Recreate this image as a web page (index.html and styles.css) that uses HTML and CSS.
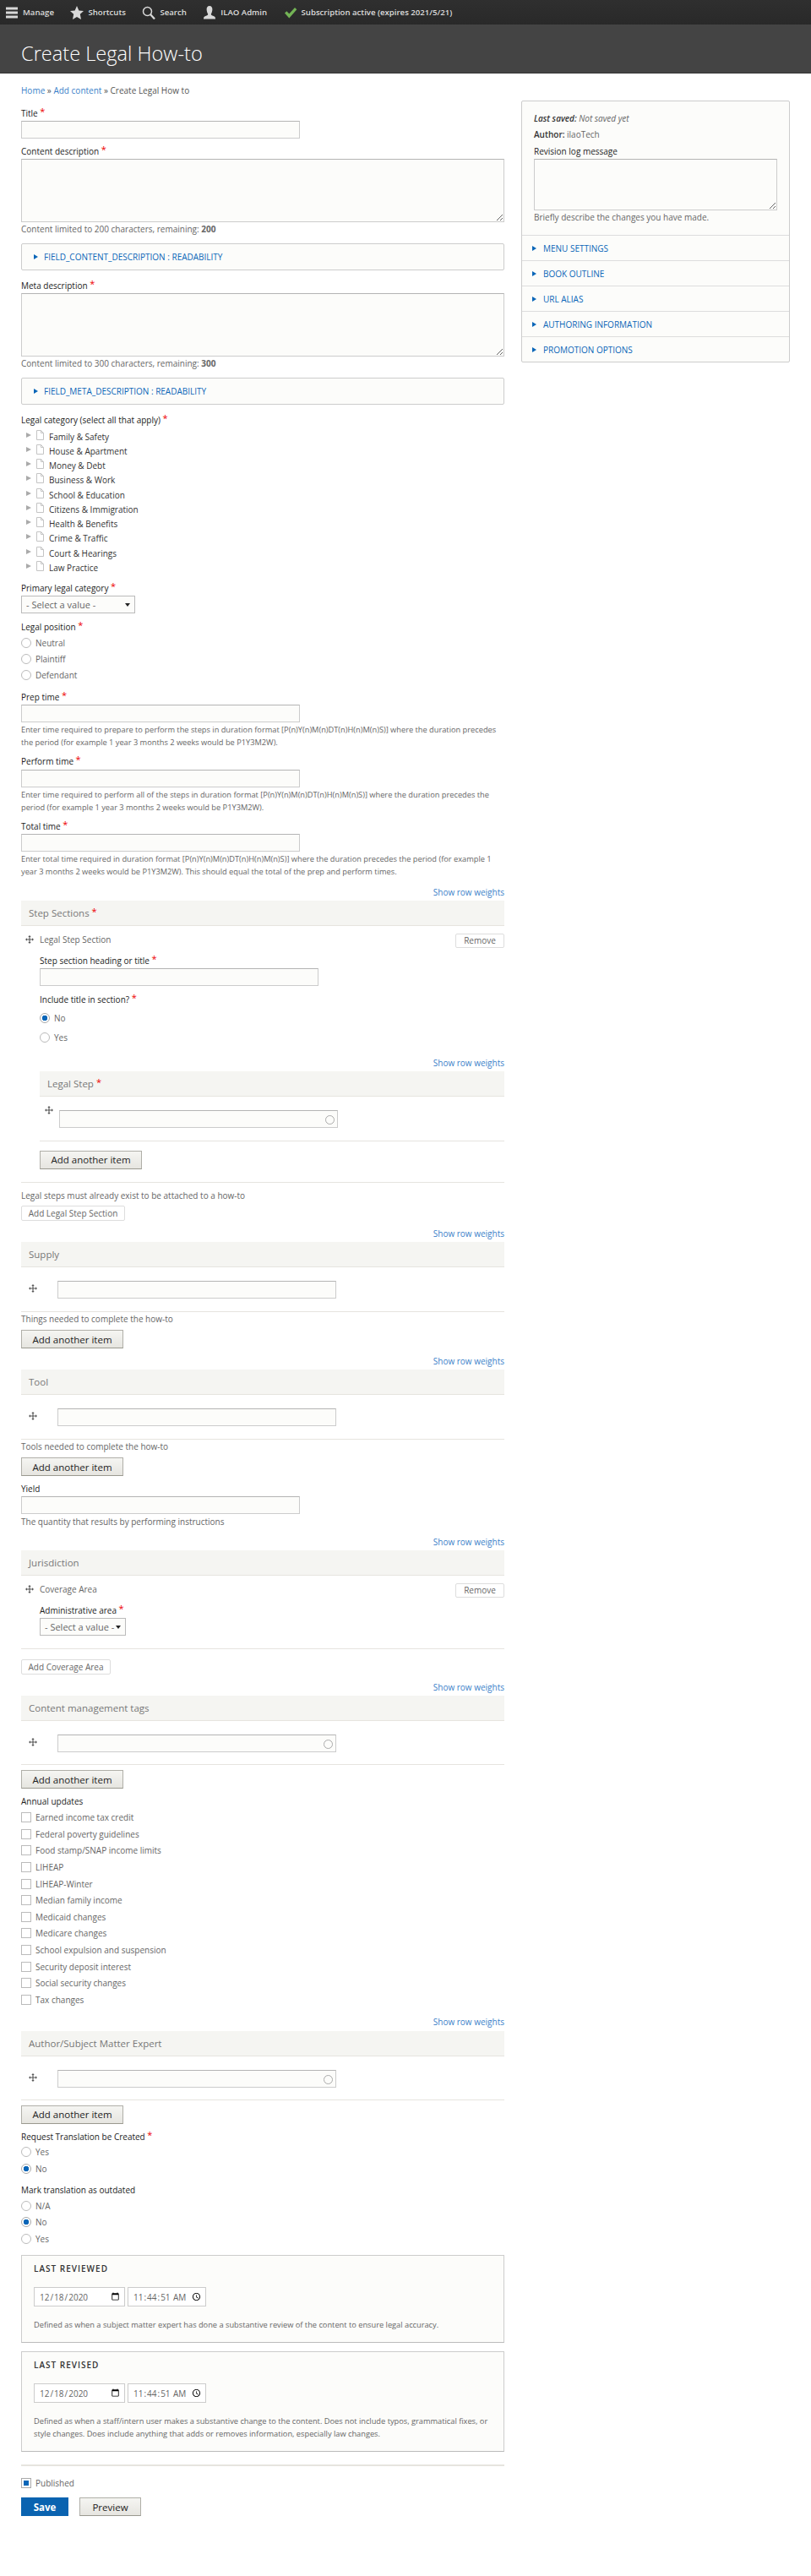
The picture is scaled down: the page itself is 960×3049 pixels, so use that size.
FILE: index.html
```html
<!doctype html>
<html>
<head>
  <title>Create Legal How-to</title>
  <link rel="stylesheet" href="styles.css">
</head>
<body>
  <svg class="defs" width="0" height="0">
    <symbol id="handle" viewBox="0 0 20 20"><path d="M10 0l3.400 4h-2.300v5h5v-2.300L20 10l-3.900 3.400v-2.300h-5v5h2.300L10 20l-3.400-3.900h2.300v-5h-5v2.300L0 10l3.900-3.300V9h5V4H6.600z"/></symbol>
    <symbol id="doc" viewBox="0 0 9 12"><path d="M.5.500h5l3 3v8h-8z" fill="#fff" stroke="#c4c4c4"/><path d="M5.500.500v3h3" fill="none" stroke="#c4c4c4"/></symbol>
  </svg>

  <nav class="toolbar">
    <a class="tool">
      <svg class="tool-icon" viewBox="0 0 16 16"><path d="M1 1.500h14v3H1zM1 6.500h14v3H1zM1 11.500h14v3H1z" fill="#d8d8d8"/></svg>Manage
    </a>
    <a class="tool">
      <svg class="tool-icon" viewBox="0 0 16 16"><path d="M8 0l2.400 5.400 5.600.6-4.200 3.800L13 16 8 12.900 3 16l1.200-6.200L0 6l5.600-.6z" fill="#d8d8d8"/></svg>Shortcuts
    </a>
    <a class="tool">
      <svg class="tool-icon" viewBox="0 0 16 16"><circle cx="6.500" cy="6.500" r="5" fill="none" stroke="#d8d8d8" stroke-width="1.500"/><path d="M10 10l5 5.500" stroke="#d8d8d8" stroke-width="2.200"/></svg>Search
    </a>
    <a class="tool">
      <svg class="tool-icon" viewBox="0 0 16 16"><path d="M8 0c2.300 0 3.400 1.800 3.400 4S10.300 9 9.800 9.800c0 1.200 1 1.500 3 2.200 1.400.5 2.200 1.200 2.200 3.500H1c0-2.300.8-3 2.200-3.500 2-.7 3-1 3-2.200C5.700 9 4.600 6.200 4.600 4S5.700 0 8 0z" fill="#d8d8d8"/></svg>ILAO Admin
    </a>
    <a class="tool">
      <svg class="tool-icon" viewBox="0 0 16 16"><path d="M1 8.500l2.300-2.300 3 3L13 2l2.300 2.300L6.300 14.500z" fill="#73b355"/></svg>Subscription active (expires 2021/5/21)
    </a>
  </nav>

  <header class="page-head">
    <h1>Create Legal How-to</h1>
  </header>

  <div class="layout">
    <form class="main">
      <div class="crumbs"><a>Home</a> » <a>Add content</a> » Create Legal How to</div>

      <div class="field first">
        <label>Title <i>*</i></label>
        <input class="text" type="text">
      </div>
      <div class="field">
        <label>Content description <i>*</i></label>
        <textarea class="area"></textarea>
        <div class="count">Content limited to 200 characters, remaining: <b>200</b></div>
      </div>
      <details class="box"><summary>FIELD_CONTENT_DESCRIPTION : READABILITY</summary></details>
      <div class="field after-box">
        <label>Meta description <i>*</i></label>
        <textarea class="area"></textarea>
        <div class="count">Content limited to 300 characters, remaining: <b>300</b></div>
      </div>
      <details class="box"><summary>FIELD_META_DESCRIPTION : READABILITY</summary></details>

      <div class="field after-box">
        <label>Legal category (select all that apply) <i>*</i></label>
        <ul class="tree">
          <li><svg class="doc"><use href="#doc"/></svg>Family &amp; Safety</li>
          <li><svg class="doc"><use href="#doc"/></svg>House &amp; Apartment</li>
          <li><svg class="doc"><use href="#doc"/></svg>Money &amp; Debt</li>
          <li><svg class="doc"><use href="#doc"/></svg>Business &amp; Work</li>
          <li><svg class="doc"><use href="#doc"/></svg>School &amp; Education</li>
          <li><svg class="doc"><use href="#doc"/></svg>Citizens &amp; Immigration</li>
          <li><svg class="doc"><use href="#doc"/></svg>Health &amp; Benefits</li>
          <li><svg class="doc"><use href="#doc"/></svg>Crime &amp; Traffic</li>
          <li><svg class="doc"><use href="#doc"/></svg>Court &amp; Hearings</li>
          <li><svg class="doc"><use href="#doc"/></svg>Law Practice</li>
        </ul>
      </div>

      <div class="field">
        <label>Primary legal category <i>*</i></label>
        <span class="select-wrap wide"><select><option>- Select a value -</option></select></span>
      </div>
      <div class="field position">
        <label>Legal position <i>*</i></label>
        <div class="options">
          <div class="option"><input type="radio" name="position"><span>Neutral</span></div>
          <div class="option"><input type="radio" name="position"><span>Plaintiff</span></div>
          <div class="option"><input type="radio" name="position"><span>Defendant</span></div>
        </div>
      </div>

      <div class="field time-field prep">
        <label>Prep time <i>*</i></label>
        <input class="text" type="text">
        <p class="help">Enter time required to prepare to perform the steps in duration format [P(n)Y(n)M(n)DT(n)H(n)M(n)S)] where the duration precedes the period (for example 1 year 3 months 2 weeks would be P1Y3M2W).</p>
      </div>
      <div class="field time-field">
        <label>Perform time <i>*</i></label>
        <input class="text" type="text">
        <p class="help">Enter time required to perform all of the steps in duration format [P(n)Y(n)M(n)DT(n)H(n)M(n)S)] where the duration precedes the period (for example 1 year 3 months 2 weeks would be P1Y3M2W).</p>
      </div>
      <div class="field time-field">
        <label>Total time <i>*</i></label>
        <input class="text" type="text">
        <p class="help">Enter total time required in duration format [P(n)Y(n)M(n)DT(n)H(n)M(n)S)] where the duration precedes the period (for example 1 year 3 months 2 weeks would be P1Y3M2W). This should equal the total of the prep and perform times.</p>
      </div>

      <section class="multi">
        <a class="weights">Show row weights</a>
        <div class="multi-head">Step Sections <i>*</i></div>
        <div class="para">
          <div class="para-top">
            <svg class="handle"><use href="#handle"/></svg>
            <span class="para-name">Legal Step Section</span>
            <button type="button" class="btn-light remove">Remove</button>
          </div>
          <div class="para-body">
            <div class="field">
              <label>Step section heading or title <i>*</i></label>
              <input class="text" type="text">
            </div>
            <div class="field include">
              <label>Include title in section? <i>*</i></label>
              <div class="options loose">
                <div class="option"><input type="radio" name="inc" checked><span>No</span></div>
                <div class="option"><input type="radio" name="inc"><span>Yes</span></div>
              </div>
            </div>
            <section class="multi nested">
              <a class="weights">Show row weights</a>
              <div class="multi-head">Legal Step <i>*</i></div>
              <div class="row tight">
                <svg class="handle"><use href="#handle"/></svg>
                <span class="auto"><input class="text" type="text"></span>
              </div>
              <button type="button" class="btn">Add another item</button>
            </section>
          </div>
        </div>
        <div class="rule-note">Legal steps must already exist to be attached to a how-to</div>
        <button type="button" class="btn-light add">Add Legal Step Section</button>
      </section>

      <section class="multi">
        <a class="weights">Show row weights</a>
        <div class="multi-head">Supply</div>
        <div class="row">
          <svg class="handle"><use href="#handle"/></svg>
          <input class="text" type="text">
        </div>
        <div class="note">Things needed to complete the how-to</div>
        <button type="button" class="btn">Add another item</button>
      </section>

      <section class="multi">
        <a class="weights">Show row weights</a>
        <div class="multi-head">Tool</div>
        <div class="row">
          <svg class="handle"><use href="#handle"/></svg>
          <input class="text" type="text">
        </div>
        <div class="note">Tools needed to complete the how-to</div>
        <button type="button" class="btn">Add another item</button>
      </section>

      <div class="field yield">
        <label>Yield</label>
        <input class="text" type="text">
        <div class="count">The quantity that results by performing instructions</div>
      </div>

      <section class="multi">
        <a class="weights">Show row weights</a>
        <div class="multi-head">Jurisdiction</div>
        <div class="para">
          <div class="para-top">
            <svg class="handle"><use href="#handle"/></svg>
            <span class="para-name">Coverage Area</span>
            <button type="button" class="btn-light remove">Remove</button>
          </div>
          <div class="para-body">
            <div class="field">
              <label>Administrative area <i>*</i></label>
              <span class="select-wrap"><select><option>- Select a value -</option></select></span>
            </div>
          </div>
        </div>
        <button type="button" class="btn-light add cover">Add Coverage Area</button>
      </section>

      <section class="multi">
        <a class="weights">Show row weights</a>
        <div class="multi-head">Content management tags</div>
        <div class="row">
          <svg class="handle"><use href="#handle"/></svg>
          <span class="auto"><input class="text" type="text"></span>
        </div>
        <button type="button" class="btn">Add another item</button>
      </section>

      <div class="field">
        <label>Annual updates</label>
        <div class="checks">
          <div class="option"><input type="checkbox"><span>Earned income tax credit</span></div>
          <div class="option"><input type="checkbox"><span>Federal poverty guidelines</span></div>
          <div class="option"><input type="checkbox"><span>Food stamp/SNAP income limits</span></div>
          <div class="option"><input type="checkbox"><span>LIHEAP</span></div>
          <div class="option"><input type="checkbox"><span>LIHEAP-Winter</span></div>
          <div class="option"><input type="checkbox"><span>Median family income</span></div>
          <div class="option"><input type="checkbox"><span>Medicaid changes</span></div>
          <div class="option"><input type="checkbox"><span>Medicare changes</span></div>
          <div class="option"><input type="checkbox"><span>School expulsion and suspension</span></div>
          <div class="option"><input type="checkbox"><span>Security deposit interest</span></div>
          <div class="option"><input type="checkbox"><span>Social security changes</span></div>
          <div class="option"><input type="checkbox"><span>Tax changes</span></div>
        </div>
      </div>

      <section class="multi expert">
        <a class="weights">Show row weights</a>
        <div class="multi-head">Author/Subject Matter Expert</div>
        <div class="row">
          <svg class="handle"><use href="#handle"/></svg>
          <span class="auto"><input class="text" type="text"></span>
        </div>
        <button type="button" class="btn">Add another item</button>
      </section>

      <div class="field">
        <label>Request Translation be Created <i>*</i></label>
        <div class="checks">
          <div class="option"><input type="radio" name="req"><span>Yes</span></div>
          <div class="option"><input type="radio" name="req" checked><span>No</span></div>
        </div>
      </div>
      <div class="field">
        <label>Mark translation as outdated</label>
        <div class="checks">
          <div class="option"><input type="radio" name="mark"><span>N/A</span></div>
          <div class="option"><input type="radio" name="mark" checked><span>No</span></div>
          <div class="option"><input type="radio" name="mark"><span>Yes</span></div>
        </div>
      </div>

      <div class="dates">
        <h2>Last reviewed</h2>
        <div class="date-row">
          <input class="date" type="date" value="2020-12-18">
          <input class="clock" type="time" step="1" value="11:44:51">
        </div>
        <p class="help">Defined as when a subject matter expert has done a substantive review of the content to ensure legal accuracy.</p>
      </div>
      <div class="dates">
        <h2>Last revised</h2>
        <div class="date-row">
          <input class="date" type="date" value="2020-12-18">
          <input class="clock" type="time" step="1" value="11:44:51">
        </div>
        <p class="help">Defined as when a staff/intern user makes a substantive change to the content. Does not include typos, grammatical fixes, or style changes. Does include anything that adds or removes information, especially law changes.</p>
      </div>

      <div class="publish">
        <div class="option"><input type="checkbox" checked><span>Published</span></div>
      </div>
      <div class="actions">
        <button type="button" class="btn save">Save</button>
        <button type="button" class="btn">Preview</button>
      </div>
    </form>

    <aside class="side">
      <div class="side-meta">
        <div class="saved"><b>Last saved:</b> Not saved yet</div>
        <div class="author"><b>Author:</b> ilaoTech</div>
        <label>Revision log message</label>
        <textarea class="area log"></textarea>
        <div class="count">Briefly describe the changes you have made.</div>
      </div>
      <details class="side-item"><summary>MENU SETTINGS</summary></details>
      <details class="side-item"><summary>BOOK OUTLINE</summary></details>
      <details class="side-item"><summary>URL ALIAS</summary></details>
      <details class="side-item"><summary>AUTHORING INFORMATION</summary></details>
      <details class="side-item"><summary>PROMOTION OPTIONS</summary></details>
    </aside>
  </div>
</body>
</html>
```
FILE: styles.css
```css
* { box-sizing: border-box; }
body { margin: 0; background: #fff; color: #333; font: 10px/14px "Open Sans", sans-serif; }
a { color: #3b7fc9; }
p { margin: 0; }
ul { list-style: none; margin: 0; padding: 0; }
.defs { position: absolute; }

/* top bars */
.toolbar { display: flex; height: 29px; padding-left: 6px; background: linear-gradient(#2f2f2f, #292929); }
.tool { display: flex; align-items: center; margin-right: 19.5px; color: #ddd; font-size: 9.6px; font-weight: 600; }
.tool-icon { width: 16px; height: 16px; margin-right: 5px; }
.page-head { height: 58px; padding: 0 25px; background: #444; border-bottom: 1px solid #333; }
h1 { margin: 0; color: #fff; font-size: 23.6px; font-weight: 300; line-height: 68px; }

/* page columns */
.layout { display: flex; padding-left: 25px; }
.main { width: 572px; padding-top: 13px; }
.side { width: 318px; height: 310px; margin: 32px 0 0 20px; background: #fcfcfa; border: 1px solid #ccc; border-radius: 2px; color: #666; }
.crumbs { color: #555; }

/* fields */
.field { margin-top: 8px; }
.field.first { margin-top: 13px; }
.field.after-box { margin-top: 11px; }
.field.position { margin-top: 9.5px; }
.field.prep { margin-top: 9px; }
.field.include { margin-top: 9px; }
label { display: block; margin-bottom: 2px; color: #222; }
.time-field label { margin-bottom: 2.5px; }
i { color: #e00; font-style: normal; font-size: 11px; line-height: 10px; vertical-align: 2px; }
.text { display: block; width: 330px; height: 21px; background: #fcfcfa; border: 1px solid #ccc; border-top-color: #b4b4b4; }
.area { display: block; width: 100%; height: 75px; background: #fcfcfa; border: 1px solid #ccc; border-top-color: #b4b4b4; }
.count { margin-top: 1px; color: #666; }
.help { margin-top: 1px; color: #666; font-size: 9.25px; line-height: 15px; }

.box { height: 32px; margin-top: 10px; background: #fcfcfa; border: 1px solid #ccc; border-radius: 2px; }
.box summary, .side-item summary { display: flex; align-items: center; height: 100%; color: #0a66b8; list-style: none; }
.box summary { padding-left: 14px; }
.box summary::before, .side-item summary::before { content: ""; margin-right: 7px; border-left: 5px solid #0a66b8; border-top: 3px solid transparent; border-bottom: 3px solid transparent; }

/* category tree */
.tree { margin-top: 4px; padding-left: 6px; }
.tree li { display: flex; align-items: center; height: 17.25px; color: #333; }
.tree li::before { content: ""; margin: -4px 6px 0 0; border-left: 6px solid #aaa; border-top: 3px solid transparent; border-bottom: 3px solid transparent; }
.doc { width: 9px; height: 12px; margin: -4px 6px 0 0; }

.select-wrap { position: relative; display: inline-block; width: 102px; vertical-align: top; }
.select-wrap.wide { width: 135px; }
.select-wrap::after { content: ""; position: absolute; right: 6px; top: 9px; border-top: 4px solid #222; border-left: 3px solid transparent; border-right: 3px solid transparent; }
select { display: block; width: 100%; height: 21px; padding-left: 5px; appearance: none; background: #fcfcfa; border: 1px solid #bbb; color: #666; font: 11px "Open Sans", sans-serif; }

/* radios and checkboxes */
.option { display: flex; align-items: center; height: 19.6px; color: #666; }
.options .option { height: 19.3px; }
.option input { flex: none; width: 12px; height: 12px; margin: 0 5px 0 0; appearance: none; background: #fff; border: 1px solid #bbb; }
input[type=radio] { border-radius: 50%; }
input[type=radio]:checked { border-color: #aaa; background: radial-gradient(circle, #0a66b8 0 3px, #fff 3.5px); }
input[type=checkbox]:checked { border-color: #aaa; background: #fff; box-shadow: inset 0 0 0 2px #fff, inset 0 0 0 6px #0a66b8; }
.options.loose { padding-top: 1.5px; }
.options.loose .option { height: 23px; }

/* multi value tables */
.multi { margin-top: 8px; }
.time-field + .multi, .yield + .multi { margin-top: 9.5px; }
.field + .multi.expert { margin-top: 9.5px; }
.multi.nested { margin-top: 12px; }
.weights { display: block; text-align: right; }
.multi-head { height: 30px; margin-top: 3px; padding-left: 9px; background: #f5f5f2; border-bottom: 1px solid #e6e4df; color: #777; font-size: 11.5px; line-height: 29px; }
.expert .multi-head { margin-top: 3.5px; }
.para { padding-bottom: 15px; border-bottom: 1px solid #e6e4df; }
.para-top { display: flex; align-items: flex-start; padding: 9px 0 0 5px; }
.handle { flex: none; width: 10px; height: 10px; margin-top: 4px; fill: #555; }
.para-top .handle { margin-top: 2px; }
.para-name { flex: 1; margin-left: 7px; color: #666; }
.para-body { padding-left: 22px; }
.row { display: flex; align-items: flex-start; gap: 24px; padding: 16px 0 14.5px 9px; border-bottom: 1px solid #e6e4df; }
.row.tight { gap: 7px; padding-left: 5.5px; }
.row.tight .handle { margin-top: -5px; }
.auto { position: relative; display: block; }
.auto::after { content: ""; position: absolute; right: 4px; top: 6px; width: 9px; height: 9px; border: 1px solid #aaa; border-radius: 50%; }
.note { margin-top: 1.5px; color: #666; }
.rule-note { margin-top: 8.5px; color: #666; }

.btn { display: block; width: 121px; height: 22px; margin-top: 6px; padding: 0; background: linear-gradient(#f5f5f2, #e6e5e0); border: 1px solid #b0afa8; border-bottom-color: #9a998f; color: #222; font: 11.5px "Open Sans", sans-serif; }
.nested .btn { margin-top: 11px; }
.expert .btn { margin-top: 5.5px; }
.btn-light { height: 18px; padding: 0; background: #fff; border: 1px solid #ddd; border-radius: 2px; color: #666; font: 10px "Open Sans", sans-serif; }
.remove { width: 58px; height: 17px; }
.add { display: block; width: 123px; margin-top: 5px; }
.add.cover { width: 106px; margin-top: 12px; }
.yield .count { margin-top: 2px; }

/* date boxes */
.dates { margin-top: 10px; padding: 8px 14px 13.5px; background: #fcfcfa; border: 1px solid #ccc; border-bottom-color: #bbb; }
h2 { margin: 0; color: #333; font-size: 10px; font-weight: 600; letter-spacing: 1px; text-transform: uppercase; }
.date-row { display: flex; gap: 3px; margin-top: 15px; }
.date, .clock { height: 23px; padding: 0 5px; background: #fff; border: 1px solid #ccc; color: #666; font: 10px "Open Sans", sans-serif; }
.date { width: 108px; }
.clock { width: 93px; }
.date::-webkit-calendar-picker-indicator, .clock::-webkit-calendar-picker-indicator { width: 11px; height: 11px; margin: 0; padding: 0; }
.dates .help { margin-top: 13.5px; }

.publish { margin-top: 15px; padding-top: 10px; border-top: 2px solid #e6e4df; }
.actions { display: flex; gap: 13px; margin-top: 7px; }
.actions .btn { width: 73px; margin-top: 0; }
.actions .save { width: 56px; background: #0a63b0; border-color: #0a63b0; color: #fff; font-weight: 700; }

/* sidebar */
.side-meta { height: 158px; padding: 13px 14px 0; }
.saved { font-style: italic; }
.author { margin-top: 5px; }
.side-meta label { margin-top: 6px; }
.side b { color: #333; font-weight: 600; }
.log { height: 61px; }
.side-item { height: 30px; border-top: 1px solid #ddd; }
.side-item summary { padding-left: 12px; }
.side-item summary::before { margin-right: 8px; }
```
